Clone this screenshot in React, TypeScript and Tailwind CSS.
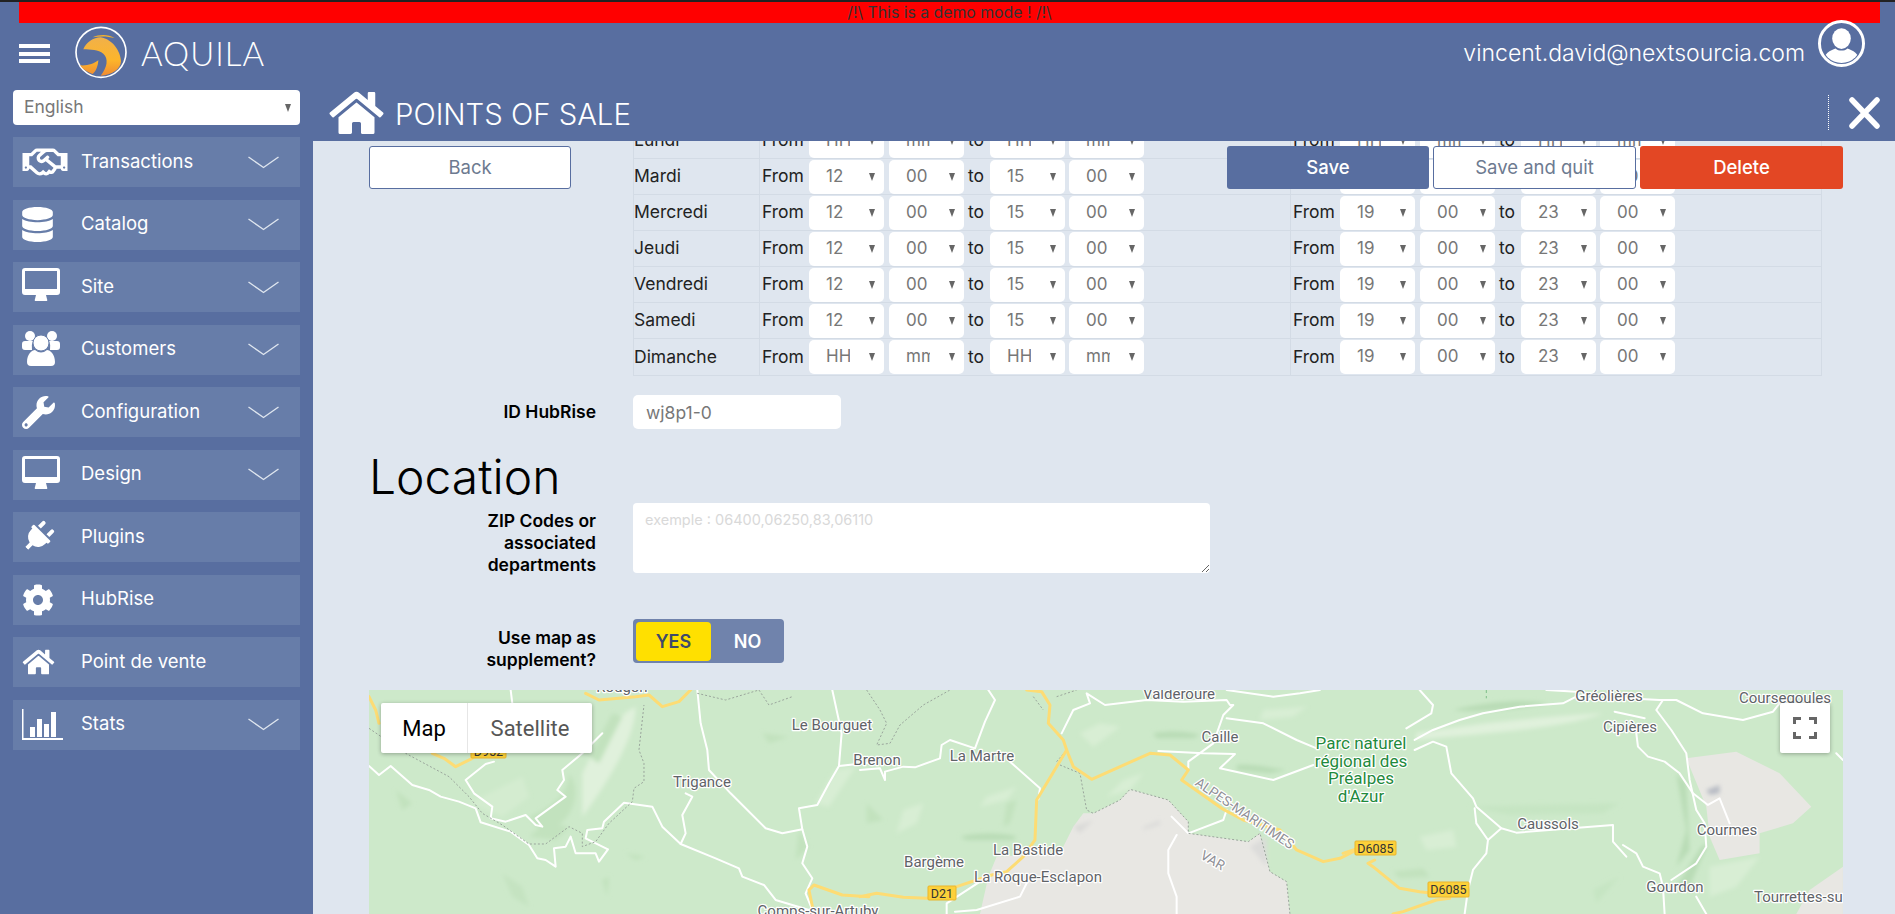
import type { ReactNode } from "react";
import { FaCog, FaDatabase, FaHome, FaPlug, FaRegHandshake, FaWrench } from "react-icons/fa";

const poppins = "font-['Inter','Liberation_Sans',sans-serif]";

function DesktopIcon() {
  return (
    <svg viewBox="0 0 38 33" className="mb-[5px] h-[33px] w-[38px]" fill="white">
      <path fillRule="evenodd" d="M3 0H35Q38 0 38 3V24Q38 27 35 27H3Q0 27 0 24V3Q0 0 3 0ZM3 3V21H35V3Z" />
      <path d="M14 27H24L25 31Q26 33 24 33H14Q12 33 13 31Z" />
    </svg>
  );
}

function UsersIcon() {
  return (
    <svg viewBox="0 0 38 35" className="mb-[3px] h-[35px] w-[38px]" fill="white">
      <circle cx="8" cy="5" r="5" />
      <circle cx="30" cy="5" r="5" />
      <path d="M0 13Q0 10 3 10H11Q9 14 10 19H3Q0 19 0 16Z" />
      <path d="M38 13Q38 10 35 10H27Q29 14 28 19H35Q38 19 38 16Z" />
      <circle cx="19" cy="12" r="8" stroke="#677da9" />
      <path d="M5 31C5 23 10 19 13 19Q19 24 25 19C28 19 33 23 33 31Q33 35 29 35H9Q5 35 5 31Z" />
    </svg>
  );
}

function StatsIcon() {
  return (
    <svg viewBox="0 0 41 31" className="h-[31px] w-[41px]" fill="white">
      <path d="M0 0h1.5v29H41v2H0z" />
      <path d="M8 18h5v10H8zM15 10h5v18h-5zM22 15h5v13h-5zM29 3h5v25h-5z" />
    </svg>
  );
}

const menu: { label: string; icon: ReactNode; chevron?: boolean }[] = [
  { label: "Transactions", icon: <FaRegHandshake className="h-[36px] w-[46px]" />, chevron: true },
  { label: "Catalog", icon: <FaDatabase className="h-[35px] w-[31px]" />, chevron: true },
  { label: "Site", icon: <DesktopIcon />, chevron: true },
  { label: "Customers", icon: <UsersIcon />, chevron: true },
  { label: "Configuration", icon: <FaWrench className="h-[33px] w-[33px] scale-x-[-1] rotate-90" />, chevron: true },
  { label: "Design", icon: <DesktopIcon />, chevron: true },
  { label: "Plugins", icon: <FaPlug className="h-[32px] w-[32px] rotate-45" /> },
  { label: "HubRise", icon: <FaCog className="h-[32px] w-[32px]" /> },
  { label: "Point de vente", icon: <FaHome className="h-[28px] w-[33px]" /> },
  { label: "Stats", icon: <StatsIcon />, chevron: true },
];

const days = [
  { name: "Lundi", am: ["HH", "mm", "HH", "mm"], pm: ["HH", "mm", "HH", "mm"] },
  { name: "Mardi", am: ["12", "00", "15", "00"], pm: ["19", "00", "23", "00"] },
  { name: "Mercredi", am: ["12", "00", "15", "00"], pm: ["19", "00", "23", "00"] },
  { name: "Jeudi", am: ["12", "00", "15", "00"], pm: ["19", "00", "23", "00"] },
  { name: "Vendredi", am: ["12", "00", "15", "00"], pm: ["19", "00", "23", "00"] },
  { name: "Samedi", am: ["12", "00", "15", "00"], pm: ["19", "00", "23", "00"] },
  { name: "Dimanche", am: ["HH", "mm", "HH", "mm"], pm: ["19", "00", "23", "00"] },
];

function Chevron() {
  return (
    <svg viewBox="0 0 31 13" className="h-[13px] w-[31px]" fill="none" stroke="#dfe6ef" strokeWidth="1.4">
      <path d="M0.5 1 15.5 11.5 30.5 1" />
    </svg>
  );
}

function Logo() {
  return (
    <svg viewBox="0 0 186 180" className="h-[60px] w-[62px]">
      <defs>
        <linearGradient id="eagle" gradientUnits="userSpaceOnUse" x1="0" y1="40" x2="0" y2="160">
          <stop offset="0" stopColor="#efb04d" />
          <stop offset="0.62" stopColor="#fdb52a" />
          <stop offset="1" stopColor="#ef8c33" />
        </linearGradient>
      </defs>
      <circle cx="93" cy="91" r="75" fill="none" stroke="white" strokeWidth="5" />
      <path
        d="M40 82C48 62 70 46 92 46C128 52 152 88 153 118C152 142 125 160 92 161C112 135 116 110 100 95C85 82 62 84 40 82Z"
        fill="url(#eagle)"
      />
      <path d="M68 46C88 36 115 36 134 48C112 42 90 42 68 46Z" fill="#f5b22e" />
      <path d="M30 130C52 132 72 125 85 115C84 132 78 148 68 156C50 150 38 142 30 130Z" fill="url(#eagle)" />
    </svg>
  );
}

function Avatar() {
  return (
    <svg viewBox="0 0 48 48" className="h-[47px] w-[47px]">
      <defs>
        <clipPath id="avatar-clip">
          <circle cx="24" cy="24" r="20" />
        </clipPath>
      </defs>
      <circle cx="24" cy="24" r="22.5" fill="none" stroke="white" strokeWidth="3" />
      <g clipPath="url(#avatar-clip)" fill="white">
        <ellipse cx="24" cy="19" rx="9.5" ry="10.5" />
        <path d="M4 48C4 35 12 31 18 29C21 32 27 32 30 29C36 31 44 35 44 48Z" />
      </g>
    </svg>
  );
}

function SideItem({ label, icon, chevron }: { label: string; icon: ReactNode; chevron?: boolean }) {
  return (
    <div className="flex h-[50px] items-center bg-[#677da9] pl-[9px] pr-[21px] text-white">
      <span className="flex w-[59px] shrink-0 items-center">{icon}</span>
      <span className="flex-1 pb-[1px] text-[18.5px]">{label}</span>
      {chevron ? <Chevron /> : null}
    </div>
  );
}

function TimeSelect({ value, className = "" }: { value: string; className?: string }) {
  return (
    <span className={"relative block h-[34px] w-[75px] shrink-0 " + className}>
      <select
        defaultValue={value}
        className="h-full w-full appearance-none rounded-[5px] bg-white pl-[17px] pr-[34px] text-[17px] text-[#777] outline-none"
      >
        <option value={value}>{value}</option>
      </select>
      <span className="pointer-events-none absolute right-[9px] top-[13px] h-0 w-0 border-x-[3.5px] border-t-[8px] border-x-transparent border-t-[#666]" />
    </span>
  );
}

function Slot({ values }: { values: string[] }) {
  return (
    <div className="flex items-center border-l border-[#d3dbe5] pl-[2px]">
      <span className="w-[47px] shrink-0 text-[17.5px] text-[#222]">From</span>
      <TimeSelect value={values[0]} />
      <TimeSelect value={values[1]} className="ml-[5px]" />
      <span className="w-[26px] shrink-0 pl-[4px] text-[17.5px] text-[#222]">to</span>
      <TimeSelect value={values[2]} />
      <TimeSelect value={values[3]} className="ml-[4px]" />
    </div>
  );
}

function FormLabel({ children }: { children: ReactNode }) {
  return <div className="w-[227px] shrink-0 text-right text-[17.5px] font-semibold leading-[22px] text-black">{children}</div>;
}

function Road({ d, color = "white", width = 2 }: { d: string; color?: string; width?: number }) {
  return (
    <path
      d={d}
      fill="none"
      stroke={color}
      strokeWidth={width}
      strokeLinejoin="round"
      strokeLinecap="round"
      vectorEffect="non-scaling-stroke"
    />
  );
}

function Border({ d }: { d: string }) {
  return <path d={d} fill="none" stroke="#9aa59c" strokeWidth={1} strokeDasharray="2 2" vectorEffect="non-scaling-stroke" />;
}

function Place({
  x,
  y,
  children,
  size = 15,
  color = "#5f6368",
  anchor = "middle",
}: {
  x: number;
  y: number;
  children: string;
  size?: number;
  color?: string;
  anchor?: "middle" | "start";
}) {
  return (
    <text
      x={x}
      y={y}
      textAnchor={anchor}
      dominantBaseline="central"
      fontSize={size}
      fill={color}
      stroke="white"
      strokeWidth="2.5"
      strokeLinejoin="round"
      className="[paint-order:stroke] font-['Roboto',sans-serif]"
    >
      {children}
    </text>
  );
}

function Shield({ x, y, w, h = 14, label }: { x: number; y: number; w: number; h?: number; label: string }) {
  return (
    <g>
      <rect x={x} y={y} width={w} height={h} rx={1} fill="#fcd13a" stroke="#e9b52c" />
      <text x={x + w / 2} y={y + h / 2} textAnchor="middle" dominantBaseline="central" fontSize="12.5" fill="#333" className="font-['Roboto',sans-serif]">
        {label}
      </text>
    </g>
  );
}

// each group is drawn in 3x coordinates, read off zoomed crops of the map
function MapDrawing() {
  const yellow = "#fddc74";
  const light = "#d8eed4";
  const dark = "#c2e2be";
  const grey = "#e8e7e3";
  return (
    <svg viewBox="369 690 1474 224" className="absolute inset-0 h-full w-full overflow-hidden">
      <defs>
        <filter id="soft" x="-5%" y="-5%" width="110%" height="110%">
          <feGaussianBlur stdDeviation="6" />
        </filter>
      </defs>
      <rect x="369" y="690" width="1474" height="224" fill="#cde9ca" />

      <g transform="translate(369 690) scale(0.3333)">
        <g filter="url(#soft)">
          <path d="M640 250C680 170 720 90 800 50C800 150 700 300 640 380Z" fill="#e0f1dc" />
          <path d="M600 250C640 300 620 400 520 430L480 380C560 350 600 300 600 250Z" fill={dark} />
          <path d="M660 200L730 70L760 80L690 220Z" fill={dark} />
          <path d="M480 440L530 400L600 410L560 450Z" fill={dark} />
          <path d="M80 300L130 340L100 360Z" fill={dark} />
          <path d="M300 340L380 300L460 260L480 320L400 380Z" fill="#d4ecd0" />
          <path d="M770 490L830 500L800 510Z" fill={dark} />
          <path d="M700 570L720 560L715 620Z" fill={dark} />
          <path d="M1290 420L1320 470L1280 510Z" fill={dark} />
          <path d="M400 550L460 590L480 650L430 620Z" fill="#c5e3c1" />
          <path d="M1400 240L1460 230L1380 350L1340 340Z" fill={light} />
          <path d="M1180 130L1260 140L1200 160Z" fill={dark} />
        </g>
        <Road d="M0 228L30 255L65 228L130 285L180 300L215 320L270 335L320 355L335 397L425 425L480 465L505 505L530 510L560 530L555 475L590 470L605 440L620 490L680 490L690 515L717 478L650 445L655 420L700 415L705 395L765 338L850 350L880 410L935 462L1040 505L1110 535L1120 560L1185 585L1220 630L1320 660" />
        <Road d="M935 462L950 430L940 375L970 320L950 310" />
        <Road d="M290 270L350 222L375 215M290 270L315 310L370 350L365 385L410 395L470 375L500 405L520 410L500 385L590 320L565 300L585 270L580 240L640 190L700 130" />
        <Road d="M985 0L995 100L1015 180L1020 240L1085 310L1190 415L1240 430L1300 418L1290 355L1345 345L1380 280L1410 228L1500 218" />
        <Road d="M1390 0L1418 130L1410 228M1300 418L1315 470L1300 520L1330 565L1310 610L1335 672M425 0L430 40" />
        <Border d="M0 115L110 190L240 260L300 320L340 370L400 405L480 462L530 462L600 410L640 430L640 470L680 455L720 400L790 335L795 295L825 275L825 220L810 180L825 45M985 10L1070 30L1170 0L1200 45L1270 20" />
        <Road d="M0 20L20 60L30 100M190 190L225 205L260 230L310 205" color={yellow} width={3} />
        <Road d="M650 10L690 30L800 20L840 15L880 50L930 35L965 0" color={yellow} width={3} />
        <Road d="M1335 672L1320 600L1335 585L1420 615L1500 620" color={yellow} width={3} />
      </g>

      <g transform="translate(860 690) scale(0.3333)">
        <path d="M810 298L925 330L985 395L985 430L1165 455L1200 430L1230 545L1280 575L1290 672L360 672L385 560L410 500L600 490L640 410L670 370L700 370L780 330Z" fill={grey} />
        <g filter="url(#soft)">
          <path d="M880 130C940 120 980 125 1020 135L1000 145L890 145Z" fill="#b9dcb6" />
          <path d="M300 440C360 425 440 430 470 440L460 450L320 450Z" fill="#b9dcb6" />
          <path d="M130 360L190 340L170 400L110 430Z" fill={light} />
          <path d="M380 320L470 290L440 330L360 350Z" fill={light} />
          <path d="M790 270L850 250L810 300L740 320Z" fill={light} />
          <path d="M20 340L70 390L20 400Z" fill={dark} />
          <path d="M440 340L470 330L450 400L430 410Z" fill={dark} />
          <path d="M1130 225C1180 220 1240 235 1280 240L1230 250L1130 240Z" fill="#b9dcb6" />
          <path d="M660 130L720 100L780 110L700 170Z" fill={light} />
          <path d="M1210 60L1340 50L1300 80L1200 90Z" fill={light} />
          <path d="M640 410L700 390L660 430Z" fill="#dadad8" />
          <path d="M1170 470L1220 440L1220 530Z" fill="#dcdcda" />
          <path d="M850 410L900 390L900 405L850 420Z" fill="#dcdcda" />
        </g>
        <Road d="M0 240L60 235L75 270L75 245L130 230L165 232L240 205L245 165L270 150L345 175L375 95L405 30L385 0" />
        <Road d="M450 215L540 295L535 328" />
        <Road d="M605 130L640 60L690 40L680 10L735 45L860 30L970 35L1100 30L1110 45L1120 45L1090 75L1060 160L985 215L985 235" />
        <Road d="M1100 85L1210 100L1310 150L1370 175" />
        <Road d="M895 183L1030 190L1125 192L1080 235L1240 270L1360 225" />
        <Road d="M1100 0L1240 20L1320 10L1380 0" />
        <Road d="M935 380L985 430L1090 390L1100 360M950 435L925 480L925 550L950 620L950 672" />
        <Road d="M260 672L260 640L360 575M285 665L350 660L480 620L500 580" />
        <Border d="M20 0L60 60L80 100L50 165L90 160L120 105L190 45L270 0M520 20L550 60M590 20L650 0M590 215L620 180M600 225L660 250L680 360L700 370L780 330L810 298L925 330L985 395L985 430L1165 455L1200 430L1230 545L1280 575L1290 672" />
        <Road d="M500 0L545 5L570 45L565 100L610 150L620 180L530 330L525 450L490 500L440 545L395 555L290 590L200 625L130 622L50 610L0 620" color={yellow} width={3} />
        <Road d="M620 180L640 230L695 268L870 190L930 195L985 240L965 270L1085 355L1150 390L1260 420L1310 480L1390 515L1440 505L1490 480" color={yellow} width={3} />
      </g>

      <g transform="translate(1343 690) scale(0.3333)">
        <path d="M1030 205L1180 185L1310 250L1405 350L1350 400L1250 430L1250 490L1130 510L1100 440L1090 350Z" fill={grey} />
        <path d="M1360 672L1400 600L1500 530L1500 672Z" fill={grey} />
        <g filter="url(#soft)">
          <path d="M220 130C400 100 600 80 780 70C650 120 400 130 220 150Z" fill="#e0f1dc" />
          <path d="M330 60C450 30 550 30 620 40C500 60 400 70 330 60Z" fill="#b9dcb6" />
          <path d="M1000 250L1030 280L1040 480L1000 530L1030 420Z" fill="#b9dcb6" />
          <path d="M1075 470L1095 460L1040 590L1000 590Z" fill="#b9dcb6" />
          <path d="M150 545L240 535L260 560L170 565Z" fill={dark} />
          <path d="M380 350L560 345L830 340L780 370L500 375Z" fill="#c6e5c3" />
          <path d="M230 440L330 420L340 470L250 480Z" fill={light} />
          <path d="M1090 300L1130 285L1130 310L1100 315Z" fill="#b8bcc4" />
          <path d="M1100 530L1250 500L1180 590L1100 620Z" fill={light} />
          <path d="M750 600L830 560L760 640Z" fill="#c6e5c3" />
        </g>
        <Road d="M230 0L270 45L265 70L190 115" />
        <Road d="M215 150L270 120L350 90L420 70L530 50L660 40L700 20L760 30L850 25L950 30L1000 30L1080 70L1200 90L1290 65L1310 40" />
        <Road d="M215 180L270 155L310 170L325 250L390 325L400 350L475 415L520 428L810 405L810 455L850 500M840 465L880 490L900 530L950 550L960 590L965 672" />
        <Road d="M395 355L400 400L435 450L430 490L390 540L375 600L365 672M475 415L435 450" />
        <Road d="M960 30L940 60L985 120L1030 190L1040 270L1060 360L1085 400L1090 470L1060 520L985 570" />
        <Road d="M880 130L885 170L915 200L965 215L1010 250L1050 310L1095 345L1130 325L1160 400" />
        <Road d="M815 65L905 85M610 0L700 5M1480 190L1500 210M1060 620L1090 672" />
        <Road d="M0 490L60 470M95 510L75 520L90 530L170 595L230 605L270 610M320 625L280 630L180 665L150 672" color={yellow} width={3} />
        <path d="M430 0V25" stroke="#7fbf8a" strokeDasharray="3 3" vectorEffect="non-scaling-stroke" />
      </g>

      <Place x={622} y={687}>Rougon</Place>
      <Place x={832} y={725}>Le Bourguet</Place>
      <Place x={877} y={760}>Brenon</Place>
      <Place x={982} y={756}>La Martre</Place>
      <Place x={702} y={782}>Trigance</Place>
      <Place x={1028} y={850}>La Bastide</Place>
      <Place x={934} y={862}>Bargème</Place>
      <Place x={1038} y={877}>La Roque-Esclapon</Place>
      <Place x={818} y={911}>Comps-sur-Artuby</Place>
      <Place x={1179} y={694}>Valderoure</Place>
      <Place x={1220} y={737}>Caille</Place>
      <Place x={1548} y={824}>Caussols</Place>
      <Place x={1609} y={696}>Gréolières</Place>
      <Place x={1630} y={727}>Cipières</Place>
      <Place x={1727} y={830}>Courmes</Place>
      <Place x={1675} y={887}>Gourdon</Place>
      <Place x={1785} y={698}>Coursegoules</Place>
      <Place x={1754} y={897} anchor="start">Tourrettes-sur-Loup</Place>
      <Place x={1361} y={743} size={17} color="#1f8a3d">Parc naturel</Place>
      <Place x={1361} y={761} size={17} color="#1f8a3d">régional des</Place>
      <Place x={1361} y={778} size={17} color="#1f8a3d">Préalpes</Place>
      <Place x={1361} y={796} size={17} color="#1f8a3d">d'Azur</Place>
      <g transform="translate(1245 813) rotate(34)">
        <Place x={0} y={0} size={13.5} color="#8f9096">ALPES-MARITIMES</Place>
      </g>
      <g transform="translate(1213 860) rotate(30)">
        <Place x={0} y={0} size={13.5} color="#8f9096">VAR</Place>
      </g>
      <Shield x={471} y={745} w={35} h={13} label="D952" />
      <Shield x={928} y={886} w={28} label="D21" />
      <Shield x={1355} y={841} w={41} label="D6085" />
      <Shield x={1428} y={882} w={41} h={15} label="D6085" />
    </svg>
  );
}

export default function App() {
  return (
    <div className={"flex h-[914px] w-full flex-col overflow-hidden bg-[#586ea0] " + poppins}>
      <div className="h-[2px] shrink-0 bg-[#222]" />
      <div className="mx-[15px] ml-[19px] flex h-[21px] shrink-0 items-center justify-center bg-[#ff0000] text-[15.8px] text-[#333]">
        /!\ This is a demo mode ! /!\
      </div>

      <header className="flex h-[61px] shrink-0 items-center pl-[19px] pr-[30px] text-white">
        <div className="flex h-[19px] w-[31px] flex-col justify-between">
          <span className="h-[4px] bg-white" />
          <span className="h-[4px] bg-white" />
          <span className="h-[4px] bg-white" />
        </div>
        <span className="ml-[20px] mt-[-3px]">
          <Logo />
        </span>
        <span className="ml-[9px] font-['Lato',sans-serif] text-[33px] font-light tracking-[1px]">AQUILA</span>
        <span className="ml-auto text-[23px] font-light">vincent.david@nextsourcia.com</span>
        <span className="ml-[13px] mt-[-20px]">
          <Avatar />
        </span>
      </header>

      <div className="flex min-h-0 flex-1">
        <aside className="w-[313px] shrink-0 px-[13px] pt-[6px]">
          <div className="relative h-[35px]">
            <select
              defaultValue="English"
              className="h-full w-full appearance-none rounded-[4px] bg-white pl-[11px] text-[17.5px] text-[#777] outline-none"
            >
              <option>English</option>
            </select>
            <span className="pointer-events-none absolute right-[9px] top-[14px] h-0 w-0 border-x-[3.5px] border-t-[8px] border-x-transparent border-t-[#666]" />
          </div>
          <nav className="mt-[12px] flex flex-col gap-[12.5px]">
            {menu.map((item) => (
              <SideItem key={item.label} {...item} />
            ))}
          </nav>
        </aside>

        <div className="flex min-w-0 flex-1 flex-col">
          <div className="flex h-[57px] shrink-0 items-center pl-[15px] pr-[15px] text-white">
            <FaHome className="h-[48px] w-[57px]" />
            <h1 className="ml-[10px] mt-[4px] text-[29.3px] font-light">POINTS OF SALE</h1>
            <span className="ml-auto flex h-[35px] items-center border-l border-dotted border-white pl-[20px]">
              <svg viewBox="0 0 31 32" className="h-[32px] w-[31px]" stroke="white" strokeWidth="5.5" strokeLinecap="round">
                <path d="M3 3 28 29M28 3 3 29" />
              </svg>
            </span>
          </div>

          <main className="relative min-h-0 flex-1 overflow-hidden bg-[#dfe6ef]">
            <div className="absolute left-[56px] right-[52px] top-[5px] z-10 flex h-[43px] justify-between text-[18.5px]">
              <button type="button" className="w-[202px] rounded-[3px] border border-[#586ea0] bg-white text-[#6d7a90]">
                Back
              </button>
              <div className="flex gap-[4px]">
                <button type="button" className="w-[202px] rounded-[3px] bg-[#586ea0] pt-[1px] font-medium text-white">
                  Save
                </button>
                <button type="button" className="w-[203px] rounded-[3px] border border-[#586ea0] bg-white text-[#6d7a90]">
                  Save and quit
                </button>
                <button type="button" className="w-[203px] rounded-[3px] bg-[#e34724] pt-[1px] font-medium text-white">
                  Delete
                </button>
              </div>
            </div>

            <div className="mt-[-18px] pl-[56px] pr-[52px]">
              <div className="ml-[264px] w-[1189px] border-b border-l border-[#d3dbe5]">
                {days.map((day) => (
                  <div key={day.name} className="grid h-[36px] grid-cols-[125px_531px_532px] items-stretch border-b border-r border-[#d3dbe5] last:border-b-0">
                    <div className="flex items-center text-[17.5px] text-[#222]">{day.name}</div>
                    <Slot values={day.am} />
                    <Slot values={day.pm} />
                  </div>
                ))}
              </div>

              <div className="mt-[19px] flex items-center gap-[37px]">
                <FormLabel>ID HubRise</FormLabel>
                <input
                  readOnly
                  value="wj8p1-0"
                  className="h-[34px] w-[208px] rounded-[5px] bg-white px-[13px] text-[17.5px] text-[#777] outline-none"
                />
              </div>

              <h2 className="mt-[20px] h-[53px] text-[48px] font-light leading-[55px] text-black">Location</h2>

              <div className="mt-[1px] flex gap-[37px]">
                <div className="pt-[7px]">
                  <FormLabel>
                    ZIP Codes or
                    <br />
                    associated
                    <br />
                    departments
                  </FormLabel>
                </div>
                <textarea
                  readOnly
                  placeholder="exemple : 06400,06250,83,06110"
                  className="h-[70px] w-[577px] rounded-[4px] bg-white px-[12px] py-[6px] text-[14.5px] outline-none placeholder:text-[#d9d9d9]"
                />
              </div>

              <div className="mt-[43px] flex gap-[37px]">
                <div className="pt-[8px]">
                  <FormLabel>
                    Use map as
                    <br />
                    supplement?
                  </FormLabel>
                </div>
                <div className="flex h-[44px] w-[151px] items-center rounded-[4px] bg-[#7083ac] pl-[3px] text-[18px] font-semibold">
                  <span className="flex h-[39px] w-[75px] items-center justify-center rounded-[4px] bg-[#ffe000] text-[#3f4a6a]">YES</span>
                  <span className="flex-1 text-center text-white">NO</span>
                </div>
              </div>

              <div className="relative mt-[19px] h-[224px]">
                <MapDrawing />
                <div className="absolute left-[12px] top-[13px] flex h-[50px] rounded-[2px] bg-white font-['Roboto',sans-serif] text-[22px] shadow-[0_1px_4px_rgba(0,0,0,0.3)]">
                  <span className="flex w-[87px] items-center justify-center border-r border-[#e6e6e6] text-black">Map</span>
                  <span className="flex w-[124px] items-center justify-center text-[#565656]">Satellite</span>
                </div>
                <div className="absolute right-[13px] top-[13px] flex h-[50px] w-[50px] items-center justify-center rounded-[2px] bg-white shadow-[0_1px_4px_rgba(0,0,0,0.3)]">
                  <svg viewBox="0 0 24 22" className="h-[22px] w-[24px]" fill="none" stroke="#666" strokeWidth="3">
                    <path d="M1.5 7V1.5H8M16 1.5H22.5V7M22.5 15V20.5H16M8 20.5H1.5V15" />
                  </svg>
                </div>
              </div>
            </div>
          </main>
        </div>
      </div>
    </div>
  );
}
